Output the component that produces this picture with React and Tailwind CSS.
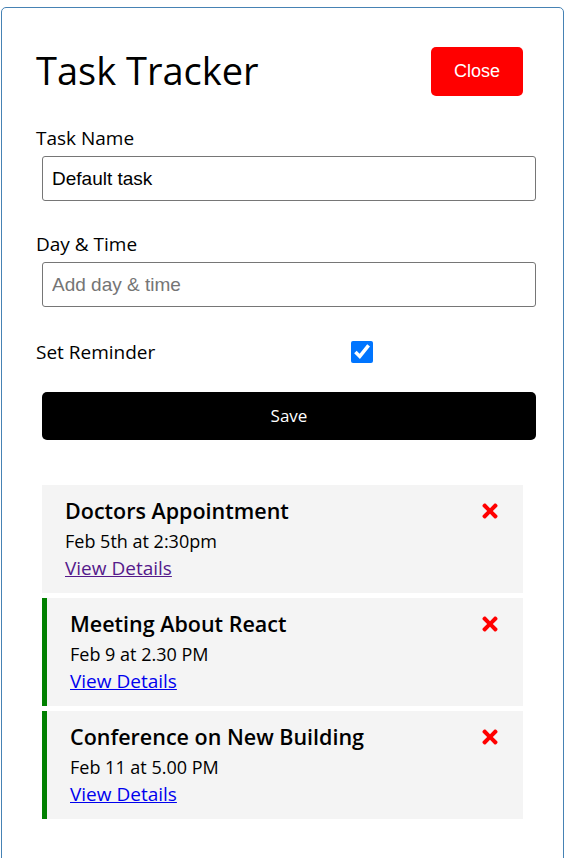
import { FaTimes } from 'react-icons/fa';

const tasks = [
  { id: 1, text: 'Doctors Appointment', day: 'Feb 5th at 2:30pm', reminder: false, visited: true },
  { id: 2, text: 'Meeting About React', day: 'Feb 9 at 2.30 PM', reminder: true },
  { id: 3, text: 'Conference on New Building', day: 'Feb 11 at 5.00 PM', reminder: true },
];

function Task({ task }) {
  return (
    <div
      className={`h-[108px] bg-[#f4f4f4] pl-[23px] pr-[22px] pt-[12px] ${
        task.reminder ? 'border-l-[5px] border-[#008000]' : ''
      }`}
    >
      <h3 className="flex h-[28px] items-center justify-between text-[21.5px] font-semibold leading-[28px]">
        {task.text}
        <FaTimes className="text-[#ff0000]" size={22} />
      </h3>
      <p className="mt-[4px] text-[18px] leading-[24px]">{task.day}</p>
      <a
        href="#"
        className={`mt-[3px] block w-fit text-[19px] leading-[24px] underline ${
          task.visited ? 'text-[#551a8b]' : 'text-[#0000ee]'
        }`}
      >
        View Details
      </a>
    </div>
  );
}

export default function App() {
  return (
    <div className="min-h-screen bg-white text-black">
      <div className="ml-[1px] mt-[7px] w-[563px] rounded-[5px] border border-[#4682b4] pb-[45px] pl-[34px] pt-[39px] font-['Open_Sans',sans-serif]">
        <header className="flex h-[49px] w-[487px] items-center justify-between">
          <h1 className="pb-[4px] text-[38px] font-medium leading-[44px]">Task Tracker</h1>
          <button className="h-[49px] w-[92px] rounded-[5px] bg-[#ff0000] font-['Liberation_Sans',Arial,sans-serif] text-[18px] text-white">
            Close
          </button>
        </header>

        <form onSubmit={(e) => e.preventDefault()}>
          <label className="mt-[30px] block text-[19px] leading-[24px]">Task Name</label>
          <input
            type="text"
            defaultValue="Default task"
            className="ml-[6px] mt-[6px] block h-[45px] w-[494px] rounded-[3px] border border-[#767676] px-[9px] font-['Liberation_Sans',Arial,sans-serif] text-[19px] text-black outline-none"
          />

          <label className="mt-[31px] block text-[19px] leading-[24px]">Day &amp; Time</label>
          <input
            type="text"
            placeholder="Add day & time"
            className="ml-[6px] mt-[6px] block h-[45px] w-[494px] rounded-[3px] border border-[#767676] px-[9px] font-['Liberation_Sans',Arial,sans-serif] text-[19px] text-black outline-none placeholder:text-[#757575]"
          />

          <div className="mt-[33px] flex h-[24px] items-center">
            <label className="w-[315px] text-[19px] leading-[24px]">Set Reminder</label>
            <input type="checkbox" defaultChecked className="m-0 h-[22px] w-[22px] accent-[#0075ff]" />
          </div>

          <button
            type="submit"
            className="ml-[6px] mt-[28px] block h-[48px] w-[494px] rounded-[5px] bg-black text-[17px] font-medium text-white"
          >
            Save
          </button>
        </form>

        <div className="ml-[6px] mt-[45px] flex w-[481px] flex-col gap-[5px]">
          {tasks.map((task) => (
            <Task key={task.id} task={task} />
          ))}
        </div>
      </div>
    </div>
  );
}
